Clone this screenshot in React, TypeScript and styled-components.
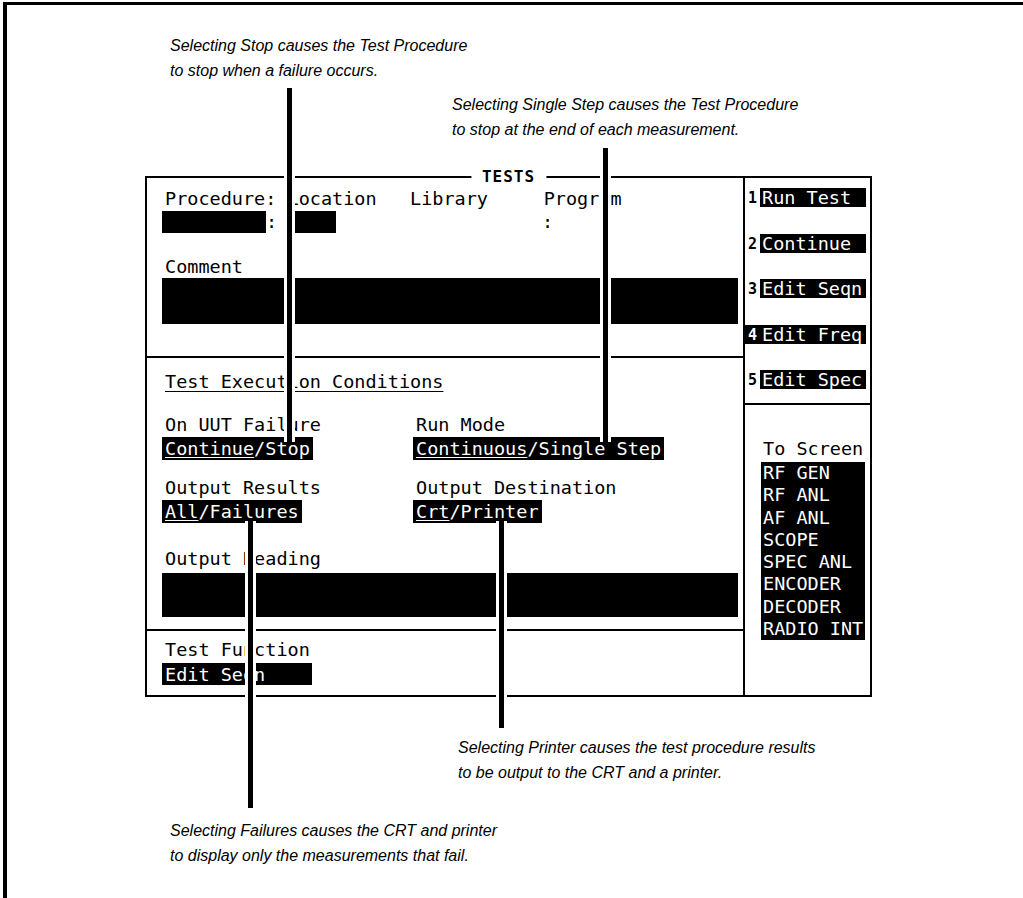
import React from "react";
import styled, { createGlobalStyle } from "styled-components";

const GlobalStyle = createGlobalStyle`
  html, body {
    margin: 0;
    padding: 0;
    background: #fff;
    overflow: hidden;
  }
`;

const MONO = `"DejaVu Sans Mono", "Liberation Mono", monospace`;

const Frame = styled.div`
  position: relative;
  margin: 2px 0 0 3px;
  height: 893px;
  border-top: 3px solid #000;
  border-left: 4px solid #000;
  color: #000;
`;

const Note = styled.p<{ $left: number; $top: number }>`
  margin: ${(p) => p.$top}px 0 0 ${(p) => p.$left}px;
  font-family: "Liberation Sans", Arial, sans-serif;
  font-style: italic;
  font-size: 16px;
  line-height: 25px;
  white-space: pre;
`;

const Screen = styled.div`
  position: relative;
  display: grid;
  grid-template-columns: 598px 1fr;
  width: 727px;
  box-sizing: border-box;
  margin: 34.5px 0 0 138px;
  border: 2px solid #000;
  font-family: ${MONO};
  font-size: 18.5px;
  line-height: 18px;
`;

const Legend = styled.div`
  position: absolute;
  top: -8px;
  left: 50%;
  transform: translateX(-50%);
  padding: 0 11px;
  background: #fff;
  font-size: 16px;
  font-weight: bold;
  letter-spacing: 1px;
  line-height: 14px;
`;

const MainCol = styled.div`
  border-right: 2px solid #000;
`;

const Section = styled.div<{ $pad: string; $divider?: boolean }>`
  padding: ${(p) => p.$pad};
  border-bottom: ${(p) => (p.$divider ? "2px solid #000" : "none")};
`;

const Label = styled.div<{ $mt?: number; $under?: boolean }>`
  margin-top: ${(p) => p.$mt ?? 0}px;
  padding-left: 3px;
  height: 18px;
  white-space: pre;
  text-decoration: ${(p) => (p.$under ? "underline" : "none")};
  text-decoration-thickness: 1px;
  text-underline-offset: 3px;
`;

const FieldRow = styled.div`
  display: flex;
  align-items: center;
  margin-top: 3px;
  height: 22px;
`;

const Field = styled.div<{ $w?: number; $h: number; $mt?: number }>`
  width: ${(p) => (p.$w ? `${p.$w}px` : "100%")};
  height: ${(p) => p.$h}px;
  margin-top: ${(p) => p.$mt ?? 0}px;
  background: #000;
  flex: none;
`;

const Colon = styled.span<{ $w: number; $ml?: number }>`
  width: ${(p) => p.$w}px;
  margin-left: ${(p) => p.$ml ?? 0}px;
  flex: none;
  white-space: pre;
`;

const ConditionGrid = styled.div`
  display: grid;
  grid-template-columns: 251px 1fr;
  row-gap: 19px;
  margin-top: 25px;
`;

const Condition = styled.div`
  display: flex;
  flex-direction: column;
  align-items: flex-start;
  gap: 3px;
`;

const OptBox = styled.div<{ $w?: number }>`
  display: inline-block;
  width: ${(p) => (p.$w ? `${p.$w}px` : "auto")};
  box-sizing: border-box;
  padding: 2px 3px;
  line-height: 19px;
  height: ${(p) => (p.$w ? 22 : 23)}px;
  background: #000;
  color: #fff;
  white-space: pre;
`;

const FunctionRow = styled.div`
  margin-top: 4px;
`;

const Sel = styled.span`
  text-decoration: underline;
  text-decoration-thickness: 1px;
  text-underline-offset: 2px;
`;

const KeyCol = styled.div`
  display: flex;
  flex-direction: column;
`;

const KeyPanel = styled.div`
  display: flex;
  flex-direction: column;
  gap: 26.5px;
  padding: 10px 0 14px 0;
  border-bottom: 2px solid #000;
`;

const KeyRow = styled.div`
  display: flex;
  height: 19px;
`;

const KeyNum = styled.span<{ $inverse?: boolean }>`
  width: 15px;
  flex: none;
  display: flex;
  align-items: flex-end;
  justify-content: center;
  padding-bottom: 1px;
  box-sizing: border-box;
  font-size: 15px;
  font-weight: bold;
  line-height: 15px;
  background: ${(p) => (p.$inverse ? "#000" : "transparent")};
  color: ${(p) => (p.$inverse ? "#fff" : "#000")};
`;

const KeyLabel = styled.span`
  width: 106px;
  flex: none;
  padding-left: 2px;
  box-sizing: border-box;
  line-height: 19px;
  background: #000;
  color: #fff;
  white-space: pre;
`;

const ToScreen = styled.div`
  padding: 35px 0 0 16px;
`;

const ToScreenTitle = styled.div`
  padding-left: 2px;
  white-space: pre;
`;

const ScreenList = styled.div`
  width: 104px;
  margin-top: 4px;
  padding-left: 2px;
  box-sizing: border-box;
  background: #000;
  color: #fff;
  line-height: 22.25px;
  white-space: pre;
`;

const Leader = styled.div<{ $left: number; $top: number; $h: number }>`
  position: absolute;
  z-index: 2;
  left: ${(p) => p.$left}px;
  top: ${(p) => p.$top}px;
  width: 5px;
  height: ${(p) => p.$h}px;
  background: #000;
  border-left: 3px solid #fff;
  border-right: 3px solid #fff;
`;

const keys = ["Run Test", "Continue", "Edit Seqn", "Edit Freq", "Edit Spec"];
const screens = [
  "RF GEN",
  "RF ANL",
  "AF ANL",
  "SCOPE",
  "SPEC ANL",
  "ENCODER",
  "DECODER",
  "RADIO INT",
];

export default function App() {
  return (
    <>
      <GlobalStyle />
      <Frame>
        <Note $left={163} $top={27.5}>
          {"Selecting Stop causes the Test Procedure\nto stop when a failure occurs."}
        </Note>
        <Note $left={445} $top={9}>
          {"Selecting Single Step causes the Test Procedure\nto stop at the end of each measurement."}
        </Note>

        <Screen>
          <Legend>TESTS</Legend>
          <MainCol>
            <Section $pad="12px 5px 32px 15px" $divider>
              <Label>{"Procedure: Location   Library     Program"}</Label>
              <FieldRow>
                <Field $w={104} $h={22} />
                <Colon $w={18}>{":"}</Colon>
                <Field $w={52} $h={22} />
                <Colon $w={20} $ml={206}>{":"}</Colon>
              </FieldRow>
              <Label $mt={25}>Comment</Label>
              <Field $h={46} $mt={2} />
            </Section>

            <Section $pad="15px 5px 12px 15px" $divider>
              <Label $under>Test Execution Conditions</Label>
              <ConditionGrid>
                <Condition>
                  <Label>On UUT Failure</Label>
                  <OptBox>
                    <Sel>Continue</Sel>/Stop
                  </OptBox>
                </Condition>
                <Condition>
                  <Label>Run Mode</Label>
                  <OptBox>
                    <Sel>Continuous</Sel>/Single Step
                  </OptBox>
                </Condition>
                <Condition>
                  <Label>Output Results</Label>
                  <OptBox>
                    <Sel>All</Sel>/Failures
                  </OptBox>
                </Condition>
                <Condition>
                  <Label>Output Destination</Label>
                  <OptBox>
                    <Sel>Crt</Sel>/Printer
                  </OptBox>
                </Condition>
              </ConditionGrid>
              <Label $mt={27}>Output Heading</Label>
              <Field $h={44} $mt={5} />
            </Section>

            <Section $pad="10px 5px 10px 15px">
              <Label>Test Function</Label>
              <FunctionRow>
                <OptBox $w={150}>Edit Seqn</OptBox>
              </FunctionRow>
            </Section>
          </MainCol>

          <KeyCol>
            <KeyPanel>
              {keys.map((k, i) => (
                <KeyRow key={k}>
                  <KeyNum $inverse={i === 3}>{i + 1}</KeyNum>
                  <KeyLabel>{k}</KeyLabel>
                </KeyRow>
              ))}
            </KeyPanel>
            <ToScreen>
              <ToScreenTitle>To Screen</ToScreenTitle>
              <ScreenList>{screens.join("\n")}</ScreenList>
            </ToScreen>
          </KeyCol>
        </Screen>

        <Note $left={451} $top={37.5}>
          {"Selecting Printer causes the test procedure results\nto be output to the CRT and a printer."}
        </Note>
        <Note $left={163} $top={33}>
          {"Selecting Failures causes the CRT and printer\nto display only the measurements that fail."}
        </Note>

        <Leader $left={277} $top={83} $h={354} />
        <Leader $left={593} $top={143} $h={294} />
        <Leader $left={489} $top={516} $h={207} />
        <Leader $left={238} $top={516} $h={287} />
      </Frame>
    </>
  );
}
